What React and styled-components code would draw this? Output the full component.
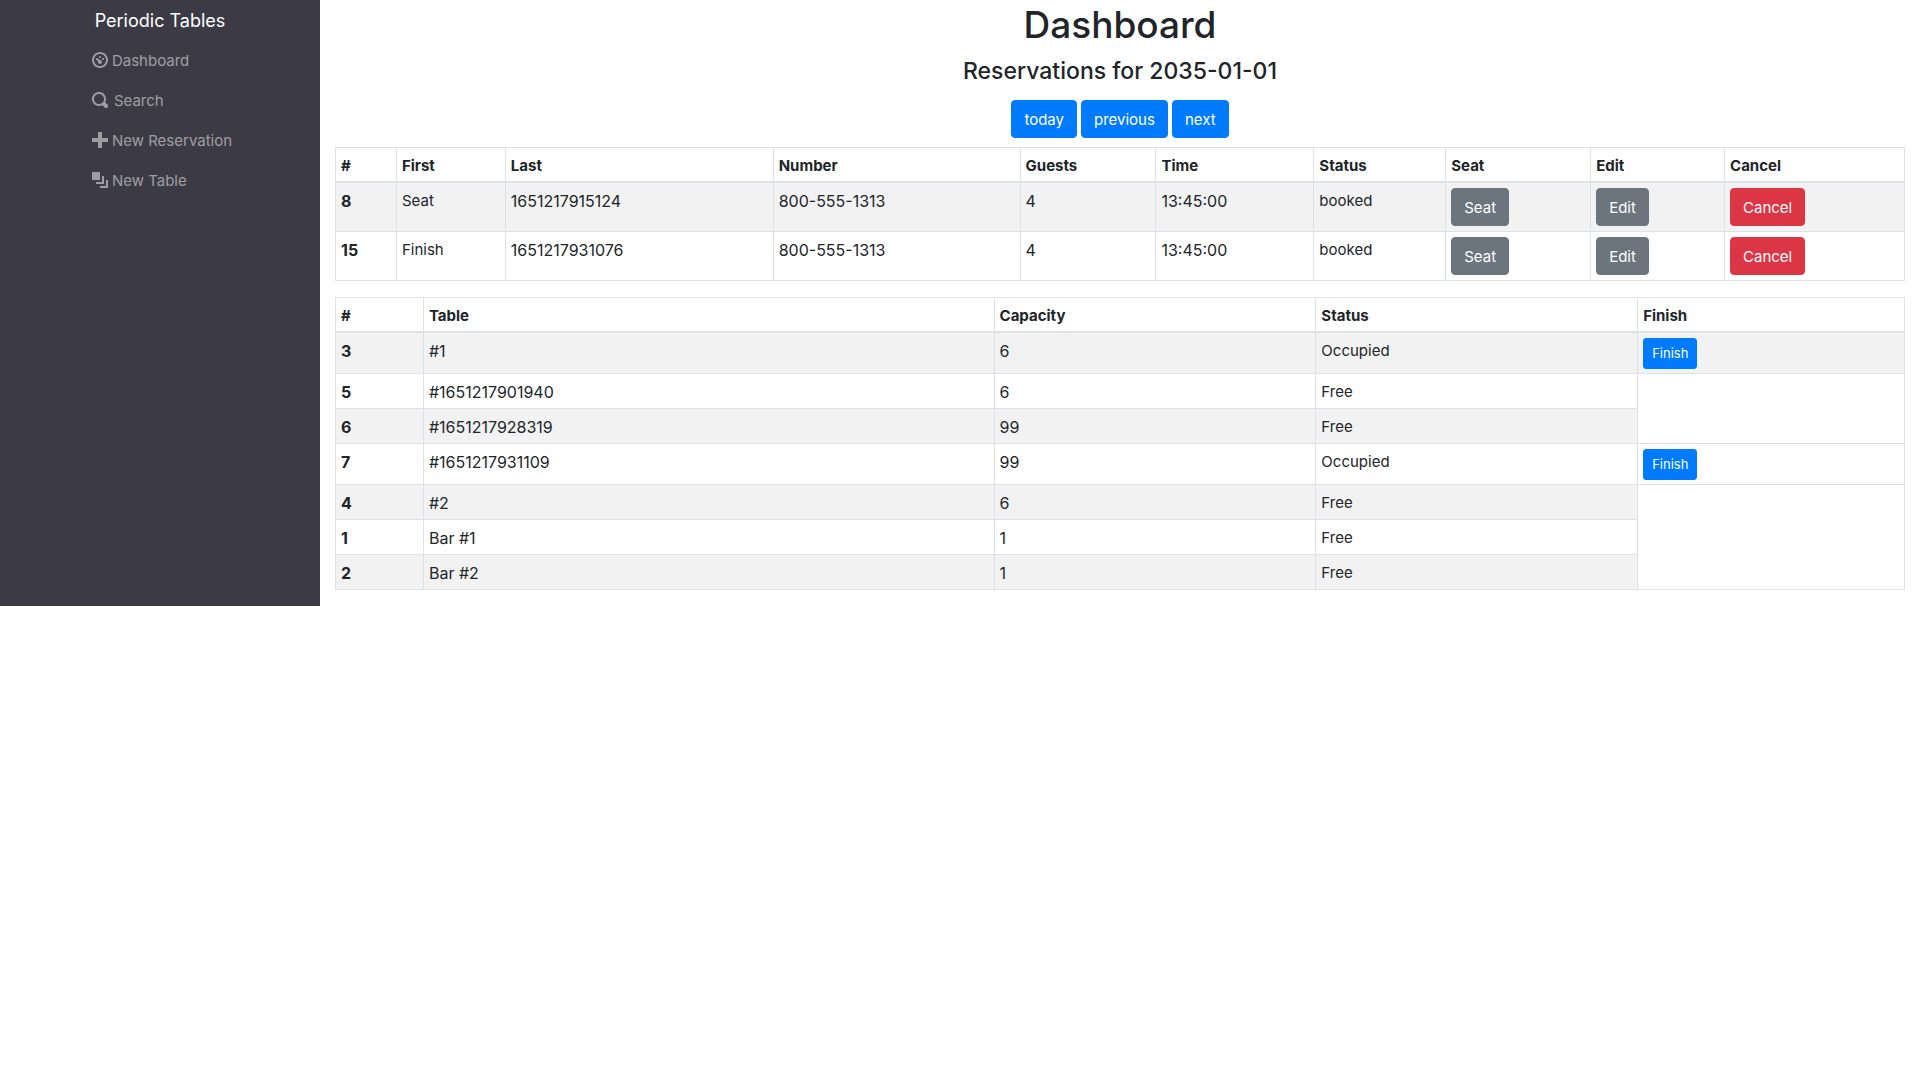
import React from "react";
import styled, { createGlobalStyle, css } from "styled-components";

const GlobalStyle = createGlobalStyle`
  *, *::before, *::after { box-sizing: border-box; }
  body {
    margin: 0;
    background: #fff;
    color: #212529;
    font-family: Inter, "Liberation Sans", sans-serif;
    font-size: 15px;
    line-height: 24px;
  }
`;

const Page = styled.div`
  display: flex;
`;

const Sidebar = styled.nav`
  flex: 0 0 calc(100% / 6);
  display: flex;
  flex-direction: column;
  align-items: center;
  background: #3c3b45;
  color: #fff;
`;

const Brand = styled.a`
  margin: 9px 0 7px;
  color: #fff;
  font-size: 18px;
  text-decoration: none;
`;

const NavList = styled.ul`
  margin: 0;
  padding: 0 0 0 4px;
  list-style: none;
`;

const NavLink = styled.a`
  display: flex;
  align-items: center;
  gap: ${(p) => (p.$wide ? 6 : 4)}px;
  height: 40px;
  color: rgba(255, 255, 255, 0.5);
  text-decoration: none;
`;

const NavLabel = styled.span`
  padding-top: 2px;
`;

const NavIcon = styled.svg`
  width: 16px;
  height: 16px;
  fill: currentColor;
`;

const Main = styled.main`
  flex: 1;
  min-width: 0;
  padding: 0 15px;
`;

const Title = styled.h1`
  margin: 0 0 6px;
  font-size: 37px;
  font-weight: 500;
  line-height: 50px;
  text-align: center;
`;

const Subtitle = styled.h2`
  margin: 0 0 13px;
  font-size: 23px;
  font-weight: 500;
  line-height: 31px;
  text-align: center;
`;

const DateControls = styled.div`
  display: flex;
  justify-content: center;
  gap: 4px;
  margin-bottom: 9px;
`;

const colors = { primary: "#007bff", secondary: "#6c757d", danger: "#dc3545" };

const Button = styled.button`
  display: block;
  padding: 7px 12px 5px;
  border: 1px solid ${(p) => colors[p.$color]};
  border-radius: 4px;
  background: ${(p) => colors[p.$color]};
  color: #fff;
  font: inherit;
  line-height: 24px;
  cursor: pointer;
  ${(p) =>
    p.$small &&
    css`
      padding: 4px 8px;
      border-radius: 3px;
      font-size: 13px;
      line-height: 21px;
    `}
`;

const DataTable = styled.table`
  width: 100%;
  margin-bottom: 16px;
  border-collapse: collapse;
  table-layout: fixed;
  border: 1px solid #dee2e6;
`;

const cell = css`
  padding: 5px 5px 3px;
  border: 1px solid #dee2e6;
  line-height: 26px;
  text-align: left;
  vertical-align: top;
`;

const ColumnHeader = styled.th`
  ${cell}
  padding-bottom: 2px;
  border-bottom-width: 2px;
`;

const RowHeader = styled.th`
  ${cell}
  font-size: 16px;
`;

const Cell = styled.td`
  ${cell}
  font-size: ${(p) => (p.$numeric ? 16 : 15)}px;
`;

const ActionCell = styled.td`
  ${cell}
  padding-bottom: ${(p) => (p.$dense ? 4 : 5)}px;
`;

const EmptyCell = styled.td`
  ${cell}
  background: #fff;
`;

const Row = styled.tr`
  &:nth-of-type(odd) { background: #f2f2f2; }
`;

const icons = {
  dashboard:
    "M4 0c-2.2 0-4 1.8-4 4s1.8 4 4 4 4-1.8 4-4-1.8-4-4-4zm0 1c1.66 0 3 1.34 3 3s-1.34 3-3 3-3-1.34-3-3 1.34-3 3-3zm0 1c-.28 0-.5.22-.5.5s.22.5.5.5.5-.22.5-.5-.22-.5-.5-.5zm-1.66 1a.5.5 0 0 0-.19.84l.91.91c-.02.08-.06.16-.06.25 0 .55.45 1 1 1s1-.45 1-1-.45-1-1-1c-.09 0-.17.04-.25.06l-.91-.91a.5.5 0 0 0-.44-.16.5.5 0 0 0-.06 0zm3.16 0c-.28 0-.5.22-.5.5s.22.5.5.5.5-.22.5-.5-.22-.5-.5-.5z",
  search:
    "M3.5 0c-1.93 0-3.5 1.57-3.5 3.5s1.57 3.5 3.5 3.5c.59 0 1.17-.14 1.66-.41a1 1 0 0 0 .13.13l1 1a1.02 1.02 0 1 0 1.44-1.44l-1-1a1 1 0 0 0-.16-.13c.27-.49.44-1.06.44-1.66 0-1.93-1.55-3.5-3.5-3.5zm0 1c1.39 0 2.5 1.11 2.5 2.5 0 .66-.24 1.27-.66 1.72-.01.01-.02.02-.03.03a1 1 0 0 0-.13.13c-.44.4-1.04.63-1.69.63-1.39 0-2.5-1.11-2.5-2.5s1.11-2.5 2.5-2.5z",
  plus: "M3 0v3h-3v2h3v3h2v-3h3v-2h-3v-3h-2z",
  layers: "M0 0v4h4v-4h-4zm5 2v3h-3v1h4v-4h-1zm2 2v3h-3v1h4v-4h-1z",
};

const links = [
  { icon: "dashboard", label: "Dashboard" },
  { icon: "search", label: "Search", wide: true },
  { icon: "plus", label: "New Reservation" },
  { icon: "layers", label: "New Table" },
];

const reservationColumns = [
  ["#", 61], ["First", 109], ["Last", 268], ["Number", 247], ["Guests", 136],
  ["Time", 158], ["Status", 132], ["Seat", 145], ["Edit", 134], ["Cancel", 180],
];

const reservations = [
  { id: 8, first: "Seat", last: "1651217915124" },
  { id: 15, first: "Finish", last: "1651217931076" },
];

const tableColumns = [
  ["#", 88], ["Table", 571], ["Capacity", 322], ["Status", 322], ["Finish", 267],
];

const tables = [
  { id: 3, name: "#1", capacity: 6, occupied: true },
  { id: 5, name: "#1651217901940", capacity: 6, emptySpan: 2 },
  { id: 6, name: "#1651217928319", capacity: 99 },
  { id: 7, name: "#1651217931109", capacity: 99, occupied: true },
  { id: 4, name: "#2", capacity: 6, emptySpan: 3 },
  { id: 1, name: "Bar #1", capacity: 1 },
  { id: 2, name: "Bar #2", capacity: 1 },
];

function Head({ columns }) {
  const total = columns.reduce((sum, [, weight]) => sum + weight, 0);
  return (
    <>
      <colgroup>
        {columns.map(([label, weight]) => (
          <col key={label} style={{ width: `${(weight / total) * 100}%` }} />
        ))}
      </colgroup>
      <thead>
        <tr>
          {columns.map(([label]) => (
            <ColumnHeader key={label} scope="col">{label}</ColumnHeader>
          ))}
        </tr>
      </thead>
    </>
  );
}

export default function App() {
  return (
    <Page>
      <GlobalStyle />
      <Sidebar>
        <Brand href="#">Periodic Tables</Brand>
        <NavList>
          {links.map(({ icon, label, wide }) => (
            <li key={icon}>
              <NavLink href="#" $wide={wide}>
                <NavIcon viewBox="0 0 8 8" aria-hidden="true">
                  <path d={icons[icon]} />
                </NavIcon>
                <NavLabel>{label}</NavLabel>
              </NavLink>
            </li>
          ))}
        </NavList>
      </Sidebar>
      <Main>
        <Title>Dashboard</Title>
        <Subtitle>Reservations for 2035-01-01</Subtitle>
        <DateControls>
          <Button $color="primary">today</Button>
          <Button $color="primary">previous</Button>
          <Button $color="primary">next</Button>
        </DateControls>
        <DataTable>
          <Head columns={reservationColumns} />
          <tbody>
            {reservations.map((r) => (
              <Row key={r.id}>
                <RowHeader scope="row">{r.id}</RowHeader>
                <Cell>{r.first}</Cell>
                <Cell $numeric>{r.last}</Cell>
                <Cell $numeric>800-555-1313</Cell>
                <Cell $numeric>4</Cell>
                <Cell $numeric>13:45:00</Cell>
                <Cell>booked</Cell>
                <ActionCell><Button $color="secondary">Seat</Button></ActionCell>
                <ActionCell><Button $color="secondary">Edit</Button></ActionCell>
                <ActionCell><Button $color="danger">Cancel</Button></ActionCell>
              </Row>
            ))}
          </tbody>
        </DataTable>
        <DataTable>
          <Head columns={tableColumns} />
          <tbody>
            {tables.map((t) => (
              <Row key={t.id}>
                <RowHeader scope="row">{t.id}</RowHeader>
                <Cell $numeric>{t.name}</Cell>
                <Cell $numeric>{t.capacity}</Cell>
                <Cell>{t.occupied ? "Occupied" : "Free"}</Cell>
                {t.occupied && (
                  <ActionCell $dense>
                    <Button $color="primary" $small>Finish</Button>
                  </ActionCell>
                )}
                {t.emptySpan && <EmptyCell rowSpan={t.emptySpan} />}
              </Row>
            ))}
          </tbody>
        </DataTable>
      </Main>
    </Page>
  );
}
